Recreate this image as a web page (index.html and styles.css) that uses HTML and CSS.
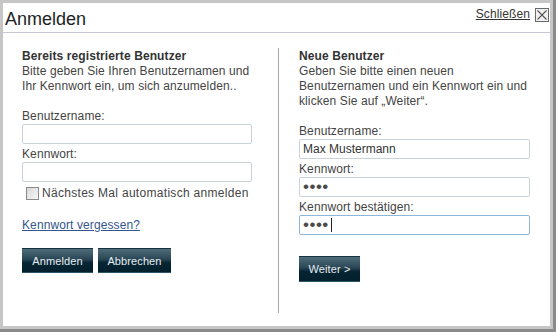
FILE: index.html
```html
<!DOCTYPE html>
<html lang="de">
<head>
<meta charset="utf-8">
<title>Anmelden</title>
<link rel="stylesheet" href="styles.css">
</head>
<body>
<div class="frame">
  <div class="dialog">
    <div class="header">
      <h1 class="title">Anmelden</h1>
      <div class="close">
        <a href="#" class="close-link">Schließen</a>
        <span class="close-box">
          <svg width="12" height="12" viewBox="0 0 12 12"><path d="M1.5 1.5 L10.5 10.5 M10.5 1.5 L1.5 10.5" stroke="#555" stroke-width="1.1" fill="none"/></svg>
        </span>
      </div>
    </div>
    <div class="content">
      <div class="col col-left">
        <h2 class="heading">Bereits registrierte Benutzer</h2>
        <p class="intro">Bitte geben Sie Ihren Benutzernamen und Ihr Kennwort ein, um sich anzumelden..</p>
        <form class="form">
          <label class="label">Benutzername:</label>
          <input class="field" type="text">
          <label class="label">Kennwort:</label>
          <input class="field" type="password">
          <label class="remember"><input type="checkbox" class="check"> Nächstes Mal automatisch anmelden</label>
          <a href="#" class="forgot">Kennwort vergessen?</a>
          <div class="buttons">
            <button type="button" class="btn btn-login">Anmelden</button>
            <button type="button" class="btn btn-cancel">Abbrechen</button>
          </div>
        </form>
      </div>
      <div class="col col-right">
        <h2 class="heading">Neue Benutzer</h2>
        <p class="intro">Geben Sie bitte einen neuen Benutzernamen und ein Kennwort ein und klicken Sie auf „Weiter“.</p>
        <form class="form">
          <label class="label">Benutzername:</label>
          <input class="field" type="text" value="Max Mustermann">
          <label class="label">Kennwort:</label>
          <input class="field pw" type="password" value="abcd">
          <label class="label">Kennwort bestätigen:</label>
          <span class="field-wrap">
            <input class="field pw focused" type="password" value="abcd">
            <span class="caret"></span>
          </span>
          <div class="buttons buttons-right">
            <button type="button" class="btn btn-next">Weiter &gt;</button>
          </div>
        </form>
      </div>
    </div>
  </div>
</div>
</body>
</html>
```
FILE: styles.css
```css
html, body {
  margin: 0;
  padding: 0;
}
body {
  width: 556px;
  height: 332px;
  background: #8a8a8a;
  font-family: "Liberation Sans", Arial, sans-serif;
  font-size: 12px;
  letter-spacing: 0.1px;
  color: #444;
  overflow: hidden;
}
.frame {
  width: 553px;
  height: 329px;
  box-sizing: border-box;
  padding: 3px;
  background: #c6c6c6;
}
.dialog {
  width: 547px;
  height: 323px;
  background: #fff;
  display: flex;
  flex-direction: column;
}
.header {
  height: 29px;
  border-bottom: 1px solid #c6c6d4;
  display: flex;
  justify-content: space-between;
  align-items: flex-start;
  padding: 0 1px 0 2px;
}
.title {
  margin: 6px 0 0;
  font-size: 18px;
  line-height: 21px;
  font-weight: normal;
  letter-spacing: 0;
  color: #1e1e1e;
}
.close {
  display: flex;
  align-items: flex-start;
  gap: 5px;
  padding-top: 4px;
}
.close-link {
  color: #333;
  text-decoration: underline;
  font-size: 12px;
  line-height: 15px;
}
.close-box {
  width: 14px;
  height: 14px;
  box-sizing: border-box;
  border: 1px solid #6a6a6a;
  background: #f0f0f0;
  display: flex;
  align-items: center;
  justify-content: center;
  margin-top: 1px;
}
.close-box svg {
  display: block;
}
.content {
  flex: 1;
  display: flex;
  padding: 15px 0 13px;
}
.col {
  box-sizing: border-box;
  padding-top: 1px;
}
.col-left {
  width: 275px;
  padding-left: 19px;
  padding-right: 26px;
}
.col-right {
  width: 272px;
  border-left: 1px solid #a8a8a8;
  padding-left: 20px;
  padding-right: 20px;
}
.heading {
  margin: 0;
  font-size: 12px;
  line-height: 15px;
  font-weight: bold;
  color: #333;
}
.intro {
  margin: 0;
  line-height: 15px;
  color: #444;
}
.form {
  margin: 15px 0 0;
  display: flex;
  flex-direction: column;
  align-items: flex-start;
}
.label {
  display: block;
  line-height: 15px;
  color: #444;
}
.field {
  display: block;
  width: 230px;
  height: 20px;
  box-sizing: border-box;
  margin: 0 0 3px;
  padding: 0 3px;
  border: 1px solid #cbd3da;
  border-radius: 2px;
  font-family: "Liberation Sans", Arial, sans-serif;
  font-size: 12px;
  color: #333;
  background: #fff;
  outline: none;
}
.col-right .field {
  width: 231px;
}
.field.pw {
  font-size: 17px;
  letter-spacing: 0.5px;
  color: #4a4a4a;
}
.field.focused {
  border-color: #8cb6da;
}
.field-wrap {
  position: relative;
  display: block;
}
.caret {
  position: absolute;
  left: 32px;
  top: 3px;
  width: 1px;
  height: 14px;
  background: #222;
}
.remember {
  display: flex;
  align-items: center;
  margin-top: 1px;
  line-height: 15px;
  letter-spacing: 0.3px;
  color: #444;
}
.check {
  appearance: none;
  -webkit-appearance: none;
  width: 13px;
  height: 13px;
  box-sizing: border-box;
  margin: 0 3px 0 4px;
  border: 1px solid #8a8a8a;
  background: linear-gradient(135deg, #d8d8d8, #f6f6f6);
}
.forgot {
  margin-top: 17px;
  line-height: 15px;
  color: #34568b;
  text-decoration: underline;
}
.buttons {
  display: flex;
  gap: 5px;
  margin-top: 15px;
}
.buttons-right {
  margin-top: 18px;
}
.btn {
  height: 25px;
  box-sizing: border-box;
  padding: 0;
  border: 0;
  border-top: 1px solid #17313d;
  border-bottom: 1px solid #2f5668;
  background: linear-gradient(to bottom, #4e6c79 0%, #2a4655 45%, #072433 60%, #03202d 100%);
  color: #e6edf2;
  font-family: "Liberation Sans", Arial, sans-serif;
  font-size: 11px;
  letter-spacing: 0.1px;
  cursor: pointer;
}
.btn-login {
  width: 71px;
}
.btn-cancel {
  width: 73px;
}
.btn-next {
  width: 61px;
  height: 26px;
}
```
